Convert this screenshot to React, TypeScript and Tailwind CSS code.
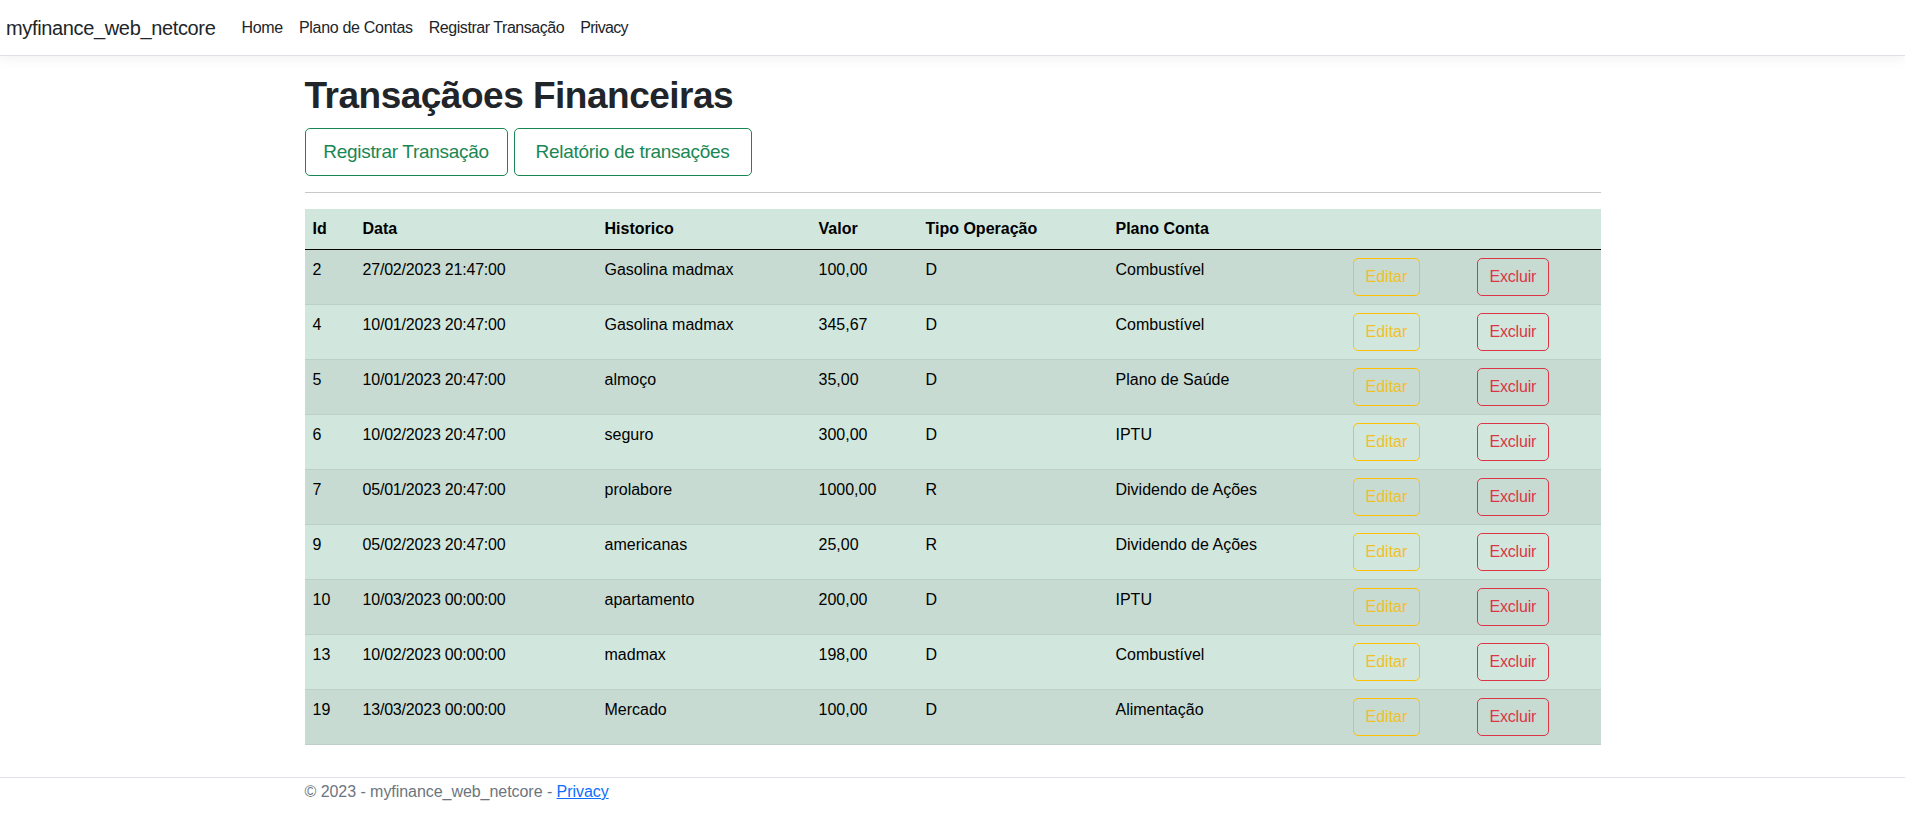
import React from "react";

type Row = { id: string; data: string; hist: string; valor: string; tipo: string; plano: string };

const rows: Row[] = [
  { id: "2", data: "27/02/2023 21:47:00", hist: "Gasolina madmax", valor: "100,00", tipo: "D", plano: "Combustível" },
  { id: "4", data: "10/01/2023 20:47:00", hist: "Gasolina madmax", valor: "345,67", tipo: "D", plano: "Combustível" },
  { id: "5", data: "10/01/2023 20:47:00", hist: "almoço", valor: "35,00", tipo: "D", plano: "Plano de Saúde" },
  { id: "6", data: "10/02/2023 20:47:00", hist: "seguro", valor: "300,00", tipo: "D", plano: "IPTU" },
  { id: "7", data: "05/01/2023 20:47:00", hist: "prolabore", valor: "1000,00", tipo: "R", plano: "Dividendo de Ações" },
  { id: "9", data: "05/02/2023 20:47:00", hist: "americanas", valor: "25,00", tipo: "R", plano: "Dividendo de Ações" },
  { id: "10", data: "10/03/2023 00:00:00", hist: "apartamento", valor: "200,00", tipo: "D", plano: "IPTU" },
  { id: "13", data: "10/02/2023 00:00:00", hist: "madmax", valor: "198,00", tipo: "D", plano: "Combustível" },
  { id: "19", data: "13/03/2023 00:00:00", hist: "Mercado", valor: "100,00", tipo: "D", plano: "Alimentação" },
];

export default function App() {
  return (
    <div className="min-h-[838px] bg-white text-[#212529] text-[16px] leading-6" style={{ fontFamily: '"Liberation Sans", Arial, sans-serif' }}>
      <header className="h-[55px] border-b border-[#dee2e6] bg-white shadow-[0_4px_12px_rgba(0,0,0,0.05)] box-content flex items-center pl-[6px]">
        <a className="text-[20px] leading-[30px] text-[#212529] tracking-[-0.35px] mr-[18px]">myfinance_web_netcore</a>
        <nav className="flex items-center">
          <a className="px-2 py-2 text-[#212529] tracking-[-0.3px]">Home</a>
          <a className="px-2 py-2 text-[#212529] tracking-[-0.3px]">Plano de Contas</a>
          <a className="px-2 py-2 text-[#212529] tracking-[-0.45px]">Registrar Transação</a>
          <a className="px-2 py-2 text-[#212529] tracking-[-0.7px]">Privacy</a>
        </nav>
      </header>

      <div className="max-w-[1320px] mx-auto px-3 mt-4">
        <main className="pb-4">
          <h1 className="text-[37px] leading-[48px] font-bold tracking-[-0.5px] mb-2 text-[#212529]">Transaçãoes Financeiras</h1>
          <div className="flex gap-[6px]">
            <button className="w-[203px] h-[48px] border border-[#198754] text-[#198754] rounded-[5px] text-[19px] leading-[30px] tracking-[-0.3px]">Registrar Transação</button>
            <button className="w-[238px] h-[48px] border border-[#198754] text-[#198754] rounded-[5px] text-[19px] leading-[30px] tracking-[-0.3px]">Relatório de transações</button>
          </div>
          <hr className="my-4 border-0 border-t border-[#c8c8c8]" />
          <table className="w-full table-fixed mb-4 text-black">
            <colgroup>
              <col className="w-[50px]" />
              <col className="w-[242px]" />
              <col className="w-[214px]" />
              <col className="w-[107px]" />
              <col className="w-[190px]" />
              <col className="w-[237px]" />
              <col className="w-[124px]" />
              <col className="w-[132px]" />
            </colgroup>
            <thead>
              <tr className="bg-[#d1e7dd] border-b border-black text-left">
                <th className="p-2 font-bold">Id</th>
                <th className="p-2 font-bold">Data</th>
                <th className="p-2 font-bold">Historico</th>
                <th className="p-2 font-bold">Valor</th>
                <th className="p-2 font-bold">Tipo Operação</th>
                <th className="p-2 font-bold">Plano Conta</th>
                <th className="p-2"></th>
                <th className="p-2"></th>
              </tr>
            </thead>
            <tbody>
              {rows.map((r, i) => (
                <tr key={r.id} className={`${i % 2 === 0 ? "bg-[#c7dbd2]" : "bg-[#d1e7dd]"} border-b border-[#bcd0c7] align-top`}>
                  <td className="p-2">{r.id}</td>
                  <td className="p-2 tracking-[-0.2px]">{r.data}</td>
                  <td className="p-2">{r.hist}</td>
                  <td className="p-2">{r.valor}</td>
                  <td className="p-2">{r.tipo}</td>
                  <td className="p-2">{r.plano}</td>
                  <td className="p-2">
                    <button className="h-[38px] px-3 border border-[#ffc107] text-[#f0c02a] rounded-[5px]">Editar</button>
                  </td>
                  <td className="p-2">
                    <button className="h-[38px] px-3 border border-[#dc3545] text-[#dc3545] rounded-[5px] tracking-[-0.2px]">Excluir</button>
                  </td>
                </tr>
              ))}
            </tbody>
          </table>
        </main>
      </div>

      <footer className="border-t border-[#dee2e6] text-[#6c757d]">
        <div className="max-w-[1320px] mx-auto px-3 pt-[2px] leading-6 tracking-[-0.05px]">
          © 2023 - myfinance_web_netcore - <a className="text-[#0d6efd] underline">Privacy</a>
        </div>
      </footer>
    </div>
  );
}
